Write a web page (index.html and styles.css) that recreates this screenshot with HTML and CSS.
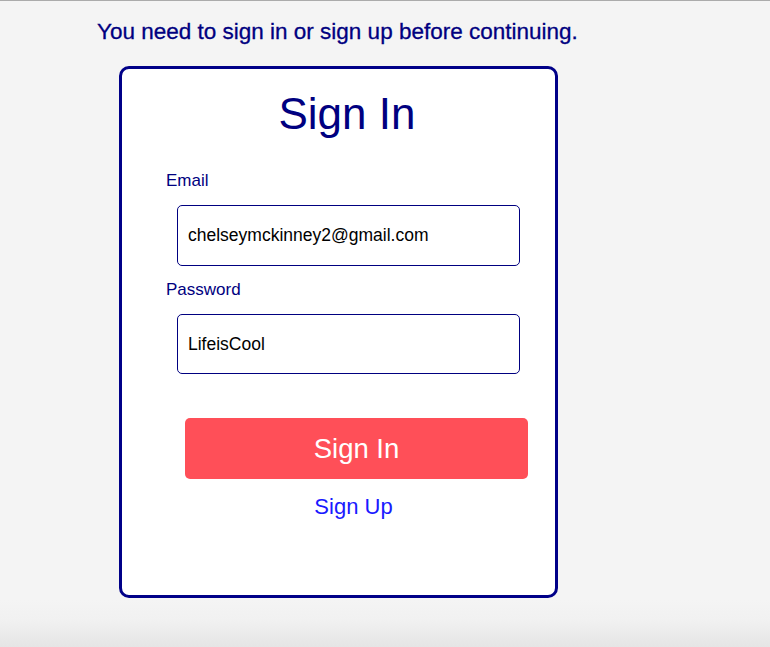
FILE: index.html
```html
<!DOCTYPE html>
<html lang="en">
<head>
<meta charset="utf-8">
<title>Sign In</title>
<link rel="stylesheet" href="styles.css">
</head>
<body>
<main class="page">
  <p class="notice">You need to sign in or sign up before continuing.</p>
  <section class="card">
    <h1 class="title">Sign In</h1>
    <form class="form">
      <label class="label" for="email">Email</label>
      <div class="field">chelseymckinney2@gmail.com</div>
      <label class="label" for="password">Password</label>
      <div class="field field-last">LifeisCool</div>
      <div class="button">Sign In</div>
      <a class="link" href="#">Sign Up</a>
    </form>
  </section>
</main>
</body>
</html>
```

FILE: styles.css
```css
* { box-sizing: border-box; }
html, body { margin: 0; padding: 0; }
body {
  height: 647px;
  overflow: hidden;
  font-family: "Liberation Sans", Arial, sans-serif;
  background: linear-gradient(to bottom, #f4f4f4 0, #f4f4f4 600px, #f1f1f1 620px, #e5e5e5 647px);
  border-top: 1px solid #ababab;
}
.page {
  display: flex;
  flex-direction: column;
  align-items: flex-start;
}
.notice {
  margin: 18px 0 0 97px;
  font-size: 22.5px;
  line-height: 26px;
  color: #000080;
  -webkit-text-stroke: 0.3px #000080;
}
.card {
  margin: 21px 0 0 119px;
  width: 439px;
  height: 532px;
  background: #fff;
  border: 3px solid #000088;
  border-radius: 10px;
  display: flex;
  flex-direction: column;
}
.title {
  margin: 19px 0 0 0;
  padding-left: 17px;
  font-size: 44px;
  line-height: 52px;
  font-weight: normal;
  text-align: center;
  color: #000080;
}
.form {
  display: flex;
  flex-direction: column;
  align-items: flex-start;
  margin-top: 31px;
  padding-left: 44px;
}
.label {
  display: block;
  font-size: 17px;
  line-height: 20px;
  color: #000080;
}
.field {
  margin: 14px 0 14px 11px;
  width: 343px;
  height: 61px;
  border: 1px solid #000080;
  border-radius: 5px;
  padding-left: 10px;
  display: flex;
  align-items: center;
  font-size: 17.5px;
  color: #000;
}
.field-last { height: 60px; margin-bottom: 44px; }
.button {
  margin-left: 19px;
  width: 343px;
  height: 61px;
  border-radius: 5px;
  background: #ff4f58;
  color: #fff;
  font-size: 27.5px;
  display: flex;
  align-items: center;
  justify-content: center;
}
.link {
  margin: 15px 0 0 16px;
  width: 343px;
  text-align: center;
  font-size: 22px;
  line-height: 26px;
  color: #1a1aff;
  text-decoration: none;
}
```
